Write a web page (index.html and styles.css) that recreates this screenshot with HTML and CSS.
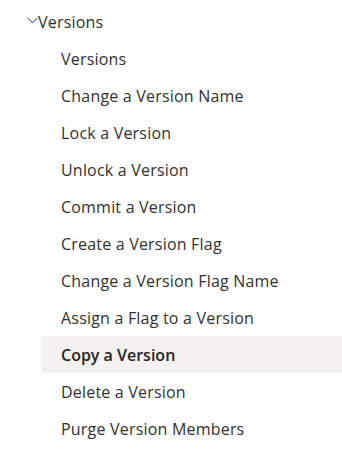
FILE: index.html
```html
<!DOCTYPE html>
<html>
<head>
<meta charset="utf-8">
<link rel="stylesheet" href="styles.css">
</head>
<body>
<div class="tree">
  <div class="header">
    <svg class="chev" width="11" height="7" viewBox="0 0 11 7"><path d="M0.5 0.8 L5.5 5.8 L10.5 0.8" fill="none" stroke="#323130" stroke-width="1"/></svg>
    <span>Versions</span>
  </div>
  <ul class="items">
    <li>Versions</li>
    <li>Change a Version Name</li>
    <li>Lock a Version</li>
    <li>Unlock a Version</li>
    <li>Commit a Version</li>
    <li>Create a Version Flag</li>
    <li>Change a Version Flag Name</li>
    <li>Assign a Flag to a Version</li>
    <li class="active">Copy a Version</li>
    <li>Delete a Version</li>
    <li>Purge Version Members</li>
  </ul>
</div>
</body>
</html>
```
FILE: styles.css
```css
html, body {
  margin: 0;
  padding: 0;
  background: #fff;
}
body {
  font-family: "Open Sans", "Noto Sans", sans-serif;
  font-size: 16px;
  letter-spacing: 0.2px;
  color: #323130;
}
.tree {
  padding-top: 3px;
}
.header {
  display: flex;
  align-items: center;
  height: 37px;
  padding-left: 27px;
}
.header span {
  padding-top: 1px;
}
.chev {
  margin-right: 0;
  margin-top: -2px;
}
.items {
  list-style: none;
  margin: 0;
  padding: 0 0 0 41px;
}
.items li {
  height: 37px;
  box-sizing: border-box;
  padding-top: 1px;
  display: flex;
  align-items: center;
  padding-left: 20px;
}
.items li.active {
  background: #f3f2f1;
  font-weight: 600;
  letter-spacing: 0;
  color: #252423;
}
```
